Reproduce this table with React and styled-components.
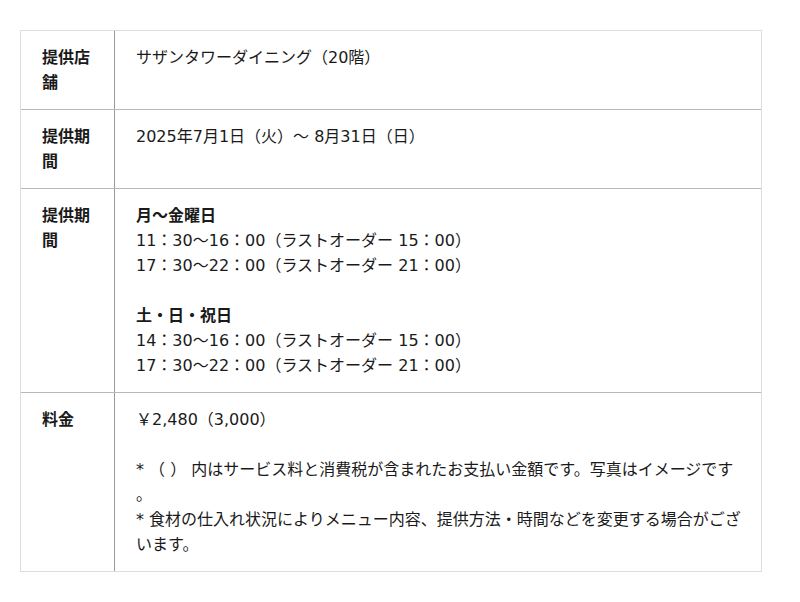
import React from 'react';
import styled, { createGlobalStyle } from 'styled-components';

const GlobalStyle = createGlobalStyle`
  body {
    margin: 0;
    background: #ffffff;
    font-family: "DejaVu Sans", "Noto Sans CJK JP", sans-serif;
    color: #1a1a1a;
  }
`;

const Page = styled.div`
  padding: 30px 20px;
`;

const Table = styled.div`
  width: 742px;
  box-sizing: border-box;
  border: 1px solid #dddddd;
`;

const Row = styled.div`
  display: flex;
  & + & {
    border-top: 1px solid #b8b8b8;
  }
`;

const Label = styled.div`
  flex: 0 0 94px;
  box-sizing: border-box;
  padding: 14px 20px 14px 21px;
  border-right: 1px solid #999999;
  font-size: 16px;
  line-height: 25px;
  font-weight: bold;
`;

const Value = styled.div`
  flex: 1;
  padding: 14px 18px 14px 21px;
  font-size: 16px;
  line-height: 25px;
  line-break: anywhere;
`;

const Line = styled.div`
  font-weight: ${(p) => (p.$bold ? 'bold' : 'normal')};
  min-height: 25px;
`;

const rows = [
  { label: '提供店舗', lines: [{ t: 'サザンタワーダイニング（20階）' }] },
  { label: '提供期間', lines: [{ t: '2025年7月1日（火）～ 8月31日（日）' }] },
  {
    label: '提供期間',
    lines: [
      { t: '月〜金曜日', bold: true },
      { t: '11：30〜16：00（ラストオーダー 15：00）' },
      { t: '17：30〜22：00（ラストオーダー 21：00）' },
      { t: '' },
      { t: '土・日・祝日', bold: true },
      { t: '14：30〜16：00（ラストオーダー 15：00）' },
      { t: '17：30〜22：00（ラストオーダー 21：00）' },
    ],
  },
  {
    label: '料金',
    lines: [
      { t: '￥2,480（3,000）' },
      { t: '' },
      { t: '* （ ） 内はサービス料と消費税が含まれたお支払い金額です。写真はイメージです。' },
      { t: '* 食材の仕入れ状況によりメニュー内容、提供方法・時間などを変更する場合がございます。' },
    ],
  },
];

export default function App() {
  return (
    <Page>
      <GlobalStyle />
      <Table>
        {rows.map((r, i) => (
          <Row key={i}>
            <Label>{r.label}</Label>
            <Value>
              {r.lines.map((l, j) => (
                <Line key={j} $bold={l.bold}>
                  {l.t}
                </Line>
              ))}
            </Value>
          </Row>
        ))}
      </Table>
    </Page>
  );
}
